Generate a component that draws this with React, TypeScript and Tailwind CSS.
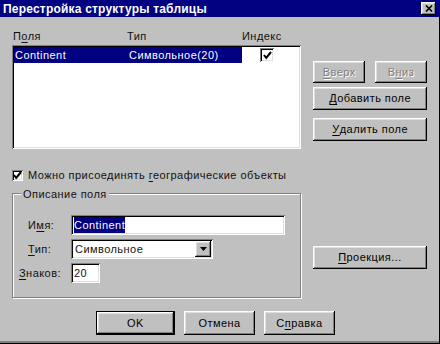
import React from "react";

const raised =
  "bg-[#c0c0c0] shadow-[inset_-1px_-1px_0_#000,inset_1px_1px_0_#fff,inset_-2px_-2px_0_#808080,inset_2px_2px_0_#dfdfdf]";
const sunken =
  "bg-white shadow-[inset_1px_1px_0_#808080,inset_-1px_-1px_0_#fff,inset_2px_2px_0_#000,inset_-2px_-2px_0_#dfdfdf]";

function Btn({
  children,
  className = "",
  disabled = false,
  isDefault = false,
}: {
  children: React.ReactNode;
  className?: string;
  disabled?: boolean;
  isDefault?: boolean;
}) {
  return (
    <div className={`${isDefault ? "border border-black" : ""} ${className}`}>
      <div
        className={`${raised} flex h-full w-full items-center justify-center ${
          disabled ? "text-[#808080] [text-shadow:1px_1px_0_#fff]" : "text-black"
        }`}
      >
        {children}
      </div>
    </div>
  );
}

function U({ children }: { children: React.ReactNode }) {
  return <span className="underline underline-offset-2">{children}</span>;
}

function Check({ className = "" }: { className?: string }) {
  return (
    <div className={`${sunken} flex items-center justify-center ${className}`}>
      <svg width="9" height="9" viewBox="0 0 9 9">
        <path d="M1 4 L3.2 6.8 L8 1" fill="none" stroke="#000" strokeWidth="2" />
      </svg>
    </div>
  );
}

export default function App() {
  return (
    <div className="h-[344px] w-[440px] overflow-hidden bg-[#c0c0c0] font-['Liberation_Sans',Arial,sans-serif] text-[11px] tracking-[0.45px] text-[#111] shadow-[inset_-1px_-1px_0_#000,inset_0_-3px_0_#808080]">
      {/* title bar */}
      <div className="flex h-[17px] items-center justify-between bg-[#000080] pl-[3px] pr-[4px]">
        <span className="text-[12px] font-bold tracking-[0.2px] text-white">
          Перестройка структуры таблицы
        </span>
        <div className={`${raised} flex h-[13px] w-[15px] items-center justify-center`}>
          <svg width="8" height="7" viewBox="0 0 8 7">
            <path d="M1 0.5 L7 6.5 M7 0.5 L1 6.5" stroke="#000" strokeWidth="1.6" />
          </svg>
        </div>
      </div>

      <div className="pl-[12px] pr-[13px]">
        {/* fields list + buttons */}
        <div className="flex pt-[10px]">
          <div className="w-[290px]">
            <div className="flex h-[18px] items-center">
              <span className="w-[115px] pl-[1px]">
                П<U>о</U>ля
              </span>
              <span className="w-[115px]">Тип</span>
              <span>Индекс</span>
            </div>
            <div className={`${sunken} h-[104px] p-[2px]`}>
              <div className="flex h-[16px] items-center">
                <div className="flex h-full w-[228px] items-center bg-[#000080] text-white">
                  <span className="w-[115px] pl-[1px]">Continent</span>
                  <span>Символьное(20)</span>
                </div>
                <Check className="ml-[18px] h-[14px] w-[14px]" />
              </div>
            </div>
          </div>
          <div className="ml-[12px] flex w-[114px] flex-col gap-[4px] pt-[34px]">
            <div className="flex h-[22px] justify-between">
              <Btn disabled className="w-[52px]">
                <U>В</U>верх
              </Btn>
              <Btn disabled className="w-[52px]">
                В<U>н</U>из
              </Btn>
            </div>
            <Btn className="h-[23px]">
              <U>Д</U>обавить поле
            </Btn>
            <Btn className="mt-[4px] h-[23px]">
              <U>У</U>далить поле
            </Btn>
          </div>
        </div>

        {/* checkbox */}
        <div className="mt-[20px] flex h-[13px] items-center">
          <Check className="h-[11px] w-[11px]" />
          <span className="ml-[5px]">
            Можно присоединять <U>г</U>еографические объекты
          </span>
        </div>

        {/* field description group + projection */}
        <div className="mt-[5px] flex">
          <div className="relative mt-[6px] h-[105px] w-[289px] border border-[#808080] shadow-[1px_1px_0_#fff,inset_1px_1px_0_#fff]">
            <span className="absolute -top-[8px] left-[8px] bg-[#c0c0c0] px-[2px]">
              Описание поля
            </span>
            <div className="flex flex-col gap-[4px] pl-[6px] pt-[21px]">
              <div className="flex h-[20px] items-center">
                <span className="w-[52px] pl-[9px]">
                  И<U>м</U>я:
                </span>
                <div className={`${sunken} flex h-[20px] w-[214px] items-center px-[3px]`}>
                  <span className="bg-[#000080] text-white">Continent</span>
                </div>
              </div>
              <div className="flex h-[20px] items-center">
                <span className="w-[52px] pl-[9px]">
                  <U>Т</U>ип:
                </span>
                <div className={`${sunken} flex h-[20px] w-[142px] items-center justify-between p-[2px] pl-[4px]`}>
                  <span>Символьное</span>
                  <div className={`${raised} flex h-[16px] w-[16px] items-center justify-center`}>
                    <svg width="7" height="4" viewBox="0 0 7 4">
                      <path d="M0 0 H7 L3.5 4 Z" fill="#000" />
                    </svg>
                  </div>
                </div>
              </div>
              <div className="flex h-[20px] items-center">
                <span className="w-[52px]">
                  <U>З</U>наков:
                </span>
                <div className={`${sunken} flex h-[20px] w-[29px] items-center px-[3px]`}>
                  20
                </div>
              </div>
            </div>
          </div>
          <div className="ml-[12px] w-[114px] pt-[59px]">
            <Btn className="h-[23px]">
              <U>П</U>роекция...
            </Btn>
          </div>
        </div>

        {/* bottom buttons */}
        <div className="mt-[13px] flex justify-center gap-[9px] pr-[8px]">
          <Btn isDefault className="h-[24px] w-[79px]">
            OK
          </Btn>
          <Btn className="h-[24px] w-[71px]">Отмена</Btn>
          <Btn className="h-[24px] w-[71px]">
            С<U>п</U>равка
          </Btn>
        </div>
      </div>
    </div>
  );
}
